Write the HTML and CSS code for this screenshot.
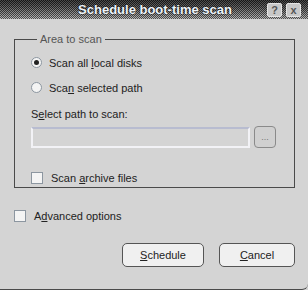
FILE: index.html
```html
<!DOCTYPE html>
<html lang="en">
<head>
  <meta charset="UTF-8">
  <title>Schedule boot-time scan</title>
  <link rel="stylesheet" href="styles.css">
</head>
<body>
  <div class="window">
    <div class="titlebar">
      <span class="title">Schedule boot-time scan</span>
      <div class="title-btns">
        <span class="tbtn">?</span>
        <span class="tbtn">x</span>
      </div>
    </div>
    <div class="content">
      <fieldset class="group">
        <legend>Area to scan</legend>
        <label class="opt"><span class="radio checked"></span><span>Scan all <u>l</u>ocal disks</span></label>
        <label class="opt"><span class="radio"></span><span>Sca<u>n</u> selected path</span></label>
        <div class="path-label">S<u>e</u>lect path to scan:</div>
        <div class="path-row">
          <div class="path-input"></div>
          <span class="browse">...</span>
        </div>
        <label class="opt check-row"><span class="check"></span><span>Scan <u>a</u>rchive files</span></label>
      </fieldset>
      <label class="opt adv"><span class="check"></span><span>A<u>d</u>vanced options</span></label>
      <div class="actions">
        <button type="button" class="btn"><u>S</u>chedule</button>
        <button type="button" class="btn"><u>C</u>ancel</button>
      </div>
    </div>
  </div>
</body>
</html>
```

FILE: styles.css
```css
body { margin: 0; background: #d4d4d4; font-family: "Liberation Sans", Arial, sans-serif; font-size: 11px; color: #222; }
.window { width: 308px; height: 290px; box-sizing: border-box; border-bottom: 1px solid #4a4a4a; border-bottom-right-radius: 6px; background: #d4d4d4; display: flex; flex-direction: column; }
.titlebar { height: 19px; position: relative; display: flex; align-items: center; justify-content: center; background: repeating-conic-gradient(rgba(0,0,0,0.55) 0 25%, rgba(255,255,255,0.12) 0 50%) 0 0/2px 2px, linear-gradient(#2a2a2a, #555 40%, #b0b0b0); }
.title { font-weight: bold; font-size: 13px; color: #eef4fa; text-shadow: 0 0 2px #000; margin-left: 2px; }
.title-btns { position: absolute; right: 7px; top: 3px; display: flex; gap: 4px; }
.tbtn { width: 15px; height: 14px; background: #c8c8c8; border: 1px solid #e4e4e4; border-radius: 2px; box-sizing: border-box; display: flex; align-items: center; justify-content: center; font-weight: bold; font-size: 11px; color: #555; }
.content { flex: 1; padding: 14px 13px 0 14px; display: flex; flex-direction: column; }
.group { margin: 0; padding: 5px 0 0 16px; border: 1px solid #4a4a4a; height: 155px; box-sizing: border-box; width: 281px; }
.group legend { padding: 0 3px; margin-left: 6px; color: #555; }
.opt { display: flex; align-items: center; height: 25px; gap: 7px; }
.radio { width: 11px; height: 11px; border-radius: 50%; border: 1px solid #8c96a0; background: #f4f4f4; box-sizing: border-box; display: flex; align-items: center; justify-content: center; }
.radio.checked::after { content: ""; width: 5px; height: 5px; border-radius: 50%; background: #222; }
.path-label { margin-top: 7px; height: 14px; line-height: 14px; }
.path-row { display: flex; align-items: center; gap: 4px; margin-top: 5px; }
.path-input { width: 219px; height: 21px; box-sizing: border-box; border: 2px solid #f2f2f6; border-top-color: #b8bcd0; background: #d4d4d4; }
.browse { width: 22px; height: 22px; box-sizing: border-box; border: 1px solid #8a8a8a; border-radius: 4px; background: #d0d0d0; color: #777; font-size: 9px; display: flex; align-items: center; justify-content: center; }
.check-row { margin-top: 17px; }
.check { width: 12px; height: 12px; border: 1px solid #8c96a0; background: #f4f4f4; box-sizing: border-box; margin-right: 1px; }
.adv { margin-top: 15px; }
.actions { display: flex; justify-content: flex-end; gap: 15px; margin-top: 15px; }
.btn { width: 82px; height: 24px; font-family: inherit; font-size: 11px; color: #222; background: #f0f0f0; border: 1px solid #555; border-radius: 5px; padding: 0; }
.btn + .btn { width: 76px; }
```
